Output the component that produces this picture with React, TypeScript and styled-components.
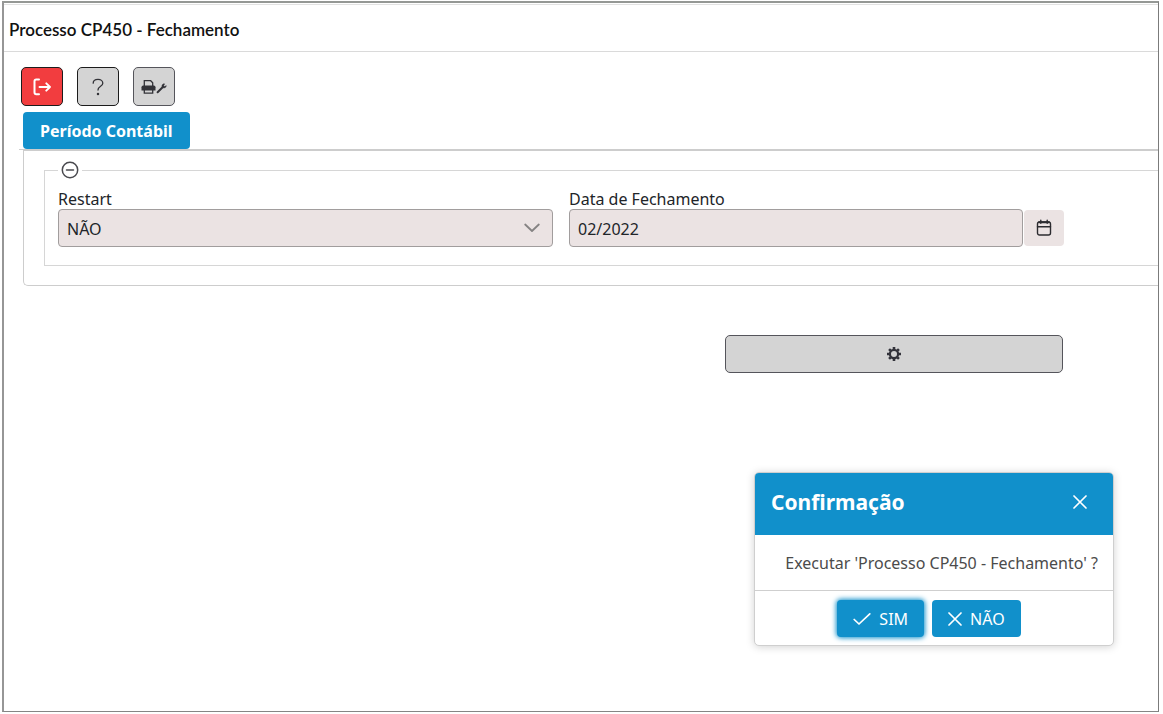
import React from "react";
import styled, { createGlobalStyle, css } from "styled-components";

const BLUE = "#1190cb";
const FIELD = "#ebe3e3";

const GlobalStyle = createGlobalStyle`
  *, *::before, *::after { box-sizing: border-box; }
  body {
    margin: 0;
    background: #fff;
    color: #212529;
    font-family: "Noto Sans", "Segoe UI", sans-serif;
    font-size: 16px;
    line-height: 20px;
  }
  button, input, select { font: inherit; color: inherit; }
`;

const Page = styled.div`
  min-height: 100vh;
  padding: 1px 4px 2px 2px;
  display: flex;
`;

const Frame = styled.main`
  position: relative;
  flex: 1;
  min-width: 0;
  border: 1px solid #858585;
  border-width: 2px 1px 1px 2px;
  border-color: #959895 #7b7b7b #858585 #969696;
`;

const Header = styled.header`
  margin-top: 1px;
  height: 48px;
  border-top: 1px solid #e2e2e2;
  border-bottom: 1px solid #dadada;
  padding: 0 5px;
  display: flex;
  align-items: center;
`;

const Title = styled.h1`
  margin: 4px 0 0;
  font-family: Lato, sans-serif;
  font-size: 17px;
  line-height: 20px;
  font-weight: 600;
  color: #111;
`;

const Toolbar = styled.div`
  display: flex;
  gap: 14px;
  padding: 15px 17px 6px;
`;

const buttonReset = css`
  display: inline-flex;
  align-items: center;
  justify-content: center;
  padding: 0;
  cursor: pointer;
`;

const ToolButton = styled.button<{ $danger?: boolean; $soft?: boolean }>`
  ${buttonReset}
  width: 42px;
  height: 39px;
  border-radius: 5px;
  border: 1px solid ${(p) => (p.$soft ? "#55555b" : "#1c1c1c")};
  background: ${(p) => (p.$danger ? "#f23d3f" : "#d4d4d4")};
  color: ${(p) => (p.$danger ? "#fff" : "#333338")};
`;

const TabList = styled.div`
  display: flex;
  padding-left: 4px;
  margin-left: 15px;
  border-bottom: 1px solid #cdcdcd;
`;

const Tab = styled.button`
  ${buttonReset}
  height: 37px;
  padding: 0 17px;
  border: 0;
  border-radius: 4px;
  background: ${BLUE};
  color: #fff;
  font-weight: 700;
`;

const Panel = styled.section`
  margin-left: 19px;
  border: 1px solid #cdcdcd;
  border-right: 0;
  border-radius: 0 0 0 5px;
  padding: 10px 0 19px 20px;
`;

const Group = styled.fieldset`
  margin: 0;
  min-width: 0;
  border: 1px solid #d6d6d6;
  border-right: 0;
  padding: 10px 94px 18px 13px;
  display: grid;
  grid-template-columns: 1fr 1fr;
  gap: 16px;
`;

const Legend = styled.legend`
  padding: 0 3px;
  line-height: 0;
`;

const Collapse = styled.button`
  ${buttonReset}
  border: 0;
  background: none;
  color: #4a4a4f;
`;

const Field = styled.div`
  display: flex;
  flex-direction: column;
  min-width: 0;
`;

const Label = styled.label`
  line-height: 20px;
`;

const Control = styled.div`
  display: flex;
  align-items: center;
  gap: 1px;
`;

const controlBox = css`
  flex: 1;
  min-width: 0;
  width: 100%;
  height: 38px;
  border: 1px solid #a19d9d;
  border-radius: 4px;
  background: ${FIELD};
  padding: 2px 8px 0;
`;

const Select = styled.select`
  ${controlBox}
  appearance: none;
`;

const Input = styled.input`
  ${controlBox}
`;

const SelectWrap = styled.div`
  display: grid;
  align-items: center;
  & > * { grid-area: 1 / 1; }
  & > svg {
    justify-self: end;
    margin-right: 13px;
    color: #858383;
    pointer-events: none;
  }
`;

const DateButton = styled.button`
  ${buttonReset}
  width: 40px;
  height: 36px;
  border: 0;
  border-radius: 4px;
  background: ${FIELD};
  color: #2c2c30;
`;

const Actions = styled.div`
  display: flex;
  justify-content: flex-end;
  padding: 49px 95px 0 0;
`;

const RunButton = styled.button`
  ${buttonReset}
  width: 338px;
  height: 38px;
  border: 1px solid #55555b;
  border-radius: 5px;
  background: #d4d4d4;
  color: #33333b;
`;

const Dialog = styled.div`
  position: absolute;
  top: 469px;
  right: 44px;
  width: 360px;
  border: 1px solid #cfcfcf;
  border-radius: 5px;
  background: #fff;
  box-shadow: 0 1px 8px rgba(0, 0, 0, 0.18);
  overflow: hidden;
`;

const DialogHeader = styled.div`
  display: flex;
  align-items: center;
  justify-content: space-between;
  height: 62px;
  padding: 0 26px 4px 16px;
  background: ${BLUE};
  color: #fff;
`;

const DialogTitle = styled.h2`
  margin: 0;
  font-size: 21px;
  line-height: 28px;
  font-weight: 700;
`;

const CloseButton = styled.button`
  ${buttonReset}
  border: 0;
  background: none;
`;

const DialogBody = styled.p`
  margin: 0;
  padding: 18px 15px 17px;
  text-align: right;
  color: #4b4b4b;
  white-space: nowrap;
`;

const DialogFooter = styled.div`
  display: flex;
  justify-content: center;
  gap: 8px;
  height: 55px;
  padding-top: 9px;
  padding-right: 10px;
  border-top: 1px solid #cfcfcf;
`;

const DialogButton = styled.button<{ $focus?: boolean }>`
  ${buttonReset}
  gap: 8px;
  height: 37px;
  padding: 0 16px;
  border: 0;
  border-radius: 4px;
  background: ${BLUE};
  color: #fff;
  box-shadow: ${(p) => (p.$focus ? "0 0 5px 1px #1190cb" : "none")};
`;

const stroke = {
  fill: "none",
  stroke: "currentColor",
  strokeLinecap: "round" as const,
  strokeLinejoin: "round" as const,
  "aria-hidden": true,
};

const ExitIcon = () => (
  <svg width="18" height="18" viewBox="0 0 18 18" strokeWidth="2" {...stroke}>
    <path d="M6 1.5H3.2C2 1.5 1.5 2.200 1.500 3.200V14.300C1.500 15.600 2 16.200 3.200 16.200H6" />
    <path d="M6.500 9H17M13.300 5.300L17 9L13.300 12.700" strokeWidth="1.900" />
  </svg>
);

const HelpIcon = () => (
  <svg width="14" height="18" viewBox="0 0 14 18" strokeWidth="1.300" {...stroke}>
    <path d="M2.200 5.200C2.200 2.800 4.200 1.300 7 1.300C9.800 1.300 11.800 3 11.800 5.200C11.800 8.300 7 8.200 7 12" />
    <circle cx="7" cy="15.900" r="0.600" fill="currentColor" />
  </svg>
);

const PrinterIcon = () => (
  <svg width="26" height="16" viewBox="0 0 26 16" aria-hidden="true">
    <path
      d="M3.300 7V1.700H9.700L11.700 3.700V7M3.300 10V14.200H11.700V10"
      fill="none"
      stroke="currentColor"
      strokeWidth="1.300"
    />
    <path d="M2.200 6.500H12.800Q14.500 6.500 14.500 8.200V11.500H.500V8.200Q.500 6.500 2.200 6.500Z" fill="currentColor" />
    <path
      d="M21.400 8.300C20.200 6.900 21.400 4.600 23.600 4.900L22.700 6.600L23.400 7.500L25.300 6.700C25.300 8.500 23.200 9.700 21.400 8.300Z"
      fill="currentColor"
      stroke="currentColor"
      strokeLinejoin="round"
      strokeWidth="0.500"
    />
    <path d="M16.600 13.200L21.600 8.300" stroke="currentColor" strokeWidth="2" strokeLinecap="round" />
  </svg>
);

const MinusCircleIcon = () => (
  <svg width="18" height="18" viewBox="0 0 18 18" strokeWidth="1.500" {...stroke}>
    <circle cx="9" cy="9" r="7.700" />
    <path d="M5.500 9H12.500" />
  </svg>
);

const ChevronIcon = () => (
  <svg width="16" height="10" viewBox="0 0 16 10" strokeWidth="1.800" {...stroke}>
    <path d="M1.200 1.500L8 8L14.800 1.500" />
  </svg>
);

const CalendarIcon = () => (
  <svg width="16" height="18" viewBox="0 0 16 18" strokeWidth="1.400" {...stroke}>
    <rect x="1.500" y="3" width="13" height="13" rx="2" />
    <path d="M1.500 7.700H14.500M4.800 1.200V4.200M11.200 1.200V4.200" />
    <path d="M3 3.200H13" strokeWidth="2" />
  </svg>
);

const GearIcon = () => (
  <svg width="14" height="14" viewBox="0 0 14 14" fill="none" stroke="currentColor" aria-hidden="true">
    <circle cx="7" cy="7" r="4.100" strokeWidth="2.200" />
    <path
      d="M7 0V2.500M7 11.500V14M0 7H2.500M11.500 7H14M2.050 2.050L3.700 3.700M10.300 10.300L11.950 11.950M2.050 11.950L3.700 10.300M10.300 3.700L11.950 2.050"
      strokeWidth="2.600"
    />
  </svg>
);

const CrossIcon = () => (
  <svg width="14" height="14" viewBox="0 0 14 14" strokeWidth="1.700" {...stroke}>
    <path d="M1 1L13 13M13 1L1 13" />
  </svg>
);

const CheckIcon = () => (
  <svg width="18" height="14" viewBox="0 0 18 14" strokeWidth="1.700" {...stroke}>
    <path d="M1.200 7.500L6 12L16.800 1.800" />
  </svg>
);

export default function App() {
  return (
    <Page>
      <GlobalStyle />
      <Frame>
        <Header>
          <Title>Processo CP450 - Fechamento</Title>
        </Header>
        <Toolbar>
          <ToolButton $danger type="button" aria-label="Sair">
            <ExitIcon />
          </ToolButton>
          <ToolButton type="button" aria-label="Ajuda">
            <HelpIcon />
          </ToolButton>
          <ToolButton $soft type="button" aria-label="Configurar impressão">
            <PrinterIcon />
          </ToolButton>
        </Toolbar>
        <TabList role="tablist">
          <Tab type="button" role="tab" aria-selected="true" id="tab-periodo" aria-controls="panel-periodo">
            Período Contábil
          </Tab>
        </TabList>
        <Panel role="tabpanel" id="panel-periodo" aria-labelledby="tab-periodo">
          <Group>
            <Legend>
              <Collapse type="button" aria-label="Recolher">
                <MinusCircleIcon />
              </Collapse>
            </Legend>
            <Field>
              <Label htmlFor="restart">Restart</Label>
              <SelectWrap>
                <Select id="restart" defaultValue="NÃO">
                  <option>NÃO</option>
                  <option>SIM</option>
                </Select>
                <ChevronIcon />
              </SelectWrap>
            </Field>
            <Field>
              <Label htmlFor="data">Data de Fechamento</Label>
              <Control>
                <Input id="data" type="text" defaultValue="02/2022" />
                <DateButton type="button" aria-label="Abrir calendário">
                  <CalendarIcon />
                </DateButton>
              </Control>
            </Field>
          </Group>
        </Panel>
        <Actions>
          <RunButton type="button" aria-label="Executar">
            <GearIcon />
          </RunButton>
        </Actions>
        <Dialog role="dialog" aria-labelledby="dialog-title">
          <DialogHeader>
            <DialogTitle id="dialog-title">Confirmação</DialogTitle>
            <CloseButton type="button" aria-label="Fechar">
              <CrossIcon />
            </CloseButton>
          </DialogHeader>
          <DialogBody>Executar 'Processo CP450 - Fechamento' ?</DialogBody>
          <DialogFooter>
            <DialogButton $focus type="button">
              <CheckIcon />
              SIM
            </DialogButton>
            <DialogButton type="button">
              <CrossIcon />
              NÃO
            </DialogButton>
          </DialogFooter>
        </Dialog>
      </Frame>
    </Page>
  );
}
